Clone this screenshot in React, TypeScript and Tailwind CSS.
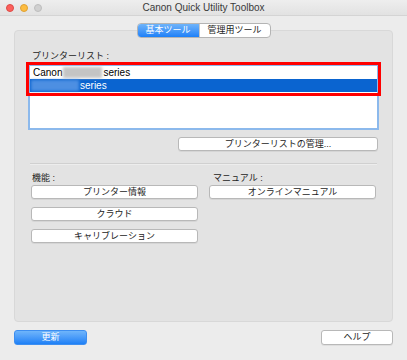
import React from 'react'

const font = { fontFamily: '"Liberation Sans", "Noto Sans CJK JP", sans-serif' }

function MacButton({ label, className = '' }: { label: string; className?: string }) {
  return (
    <div
      className={`h-[14px] flex items-center justify-center bg-white border border-[#b8b8b8] rounded-[3px] shadow-[0_1px_0_rgba(0,0,0,0.06)] text-[9px] leading-none text-[#1c1c1c] ${className}`}
    >
      {label}
    </div>
  )
}

export default function App() {
  return (
    <div className="w-[407px] h-[360px] bg-[#ececec] flex flex-col overflow-hidden" style={font}>
      {/* Title bar */}
      <div className="h-[16px] grid grid-cols-[1fr_auto_1fr] items-center border-b border-[#d4d4d4] bg-gradient-to-b from-[#eeeeee] to-[#e2e2e2]">
        <div className="flex items-center gap-[6px] pl-[6px]">
          <span className="w-[8px] h-[8px] rounded-full bg-[#fc605c] border border-[#de4a45]" />
          <span className="w-[8px] h-[8px] rounded-full bg-[#fdbc40] border border-[#dea135]" />
          <span className="w-[8px] h-[8px] rounded-full bg-[#d0d0d0] border border-[#bdbdbd]" />
        </div>
        <div className="text-[10px] leading-none text-[#3a3a3a]">Canon Quick Utility Toolbox</div>
        <div />
      </div>

      <div className="flex-1 flex flex-col px-[14px]">
        {/* Tabs */}
        <div className="relative z-10 mt-[7px] flex justify-center">
          <div className="flex h-[15px] rounded-[4px] border border-[#b4b4b4] overflow-hidden bg-white text-[9px] leading-none">
            <div className="w-[61px] flex items-center justify-center text-white bg-gradient-to-b from-[#6db3fa] to-[#1b80f8]">
              基本ツール
            </div>
            <div className="w-[71px] flex items-center justify-center text-[#1c1c1c] border-l border-[#c8c8c8]">
              管理用ツール
            </div>
          </div>
        </div>

        {/* Group panel */}
        <div className="-mt-[8px] h-[292px] bg-[#e3e3e3] border border-[#d8d8d8] rounded-[4px] px-[13px] pt-[19px] flex flex-col">
          <div className="pl-[4px] text-[9px] leading-[12px] text-[#1c1c1c]">プリンターリスト :</div>

          {/* Printer list */}
          <div className="relative mt-[2px] h-[66px] bg-white border-2 border-[#8cb9ec]">
            <div className="h-[13px] flex items-center pl-[3px] text-[10px] leading-none text-black">
              <span>Canon</span>
              <span className="ml-[1px] w-[39px] h-[11px] bg-[#c4c4c4] blur-[1.5px]" />
              <span className="ml-[1px]">series</span>
            </div>
            <div className="h-[13px] flex items-center pl-[1px] bg-[#0a64d0] text-[10px] leading-none text-white">
              <span className="w-[48px] h-[11px] bg-[#4d8fe2] blur-[1.5px]" />
              <span className="ml-[1px]">series</span>
            </div>
            <div className="absolute left-[-4px] top-[-4px] w-[355px] h-[34px] border-[3px] border-[#ff0000]" />
          </div>

          <div className="mt-[7px] flex justify-end pr-[1px]">
            <MacButton label="プリンターリストの管理..." className="w-[200px]" />
          </div>

          <div className="mt-[12px] mx-[2px] h-[2px] border-t border-[#d0d0d0] border-b border-b-[#ededed]" />

          <div className="mt-[7px] px-[3px] grid grid-cols-2 gap-x-[11px]">
            <div className="flex flex-col">
              <div className="pl-[1px] text-[9px] leading-[12px] text-[#1c1c1c]">機能 :</div>
              <div className="mt-[1px] flex flex-col gap-[8px]">
                <MacButton label="プリンター情報" />
                <MacButton label="クラウド" />
                <MacButton label="キャリブレーション" />
              </div>
            </div>
            <div className="flex flex-col">
              <div className="pl-[4px] text-[9px] leading-[12px] text-[#1c1c1c]">マニュアル :</div>
              <div className="mt-[1px] flex flex-col">
                <MacButton label="オンラインマニュアル" />
              </div>
            </div>
          </div>
        </div>

        {/* Bottom buttons */}
        <div className="mt-[8px] flex justify-between">
          <div className="w-[73px] h-[15px] flex items-center justify-center rounded-[3px] border border-[#3d8ef0] bg-gradient-to-b from-[#6fb5fb] to-[#1c80f6] text-white text-[9px] leading-none">
            更新
          </div>
          <MacButton label="ヘルプ" className="w-[72px] h-[15px]" />
        </div>
      </div>
    </div>
  )
}
